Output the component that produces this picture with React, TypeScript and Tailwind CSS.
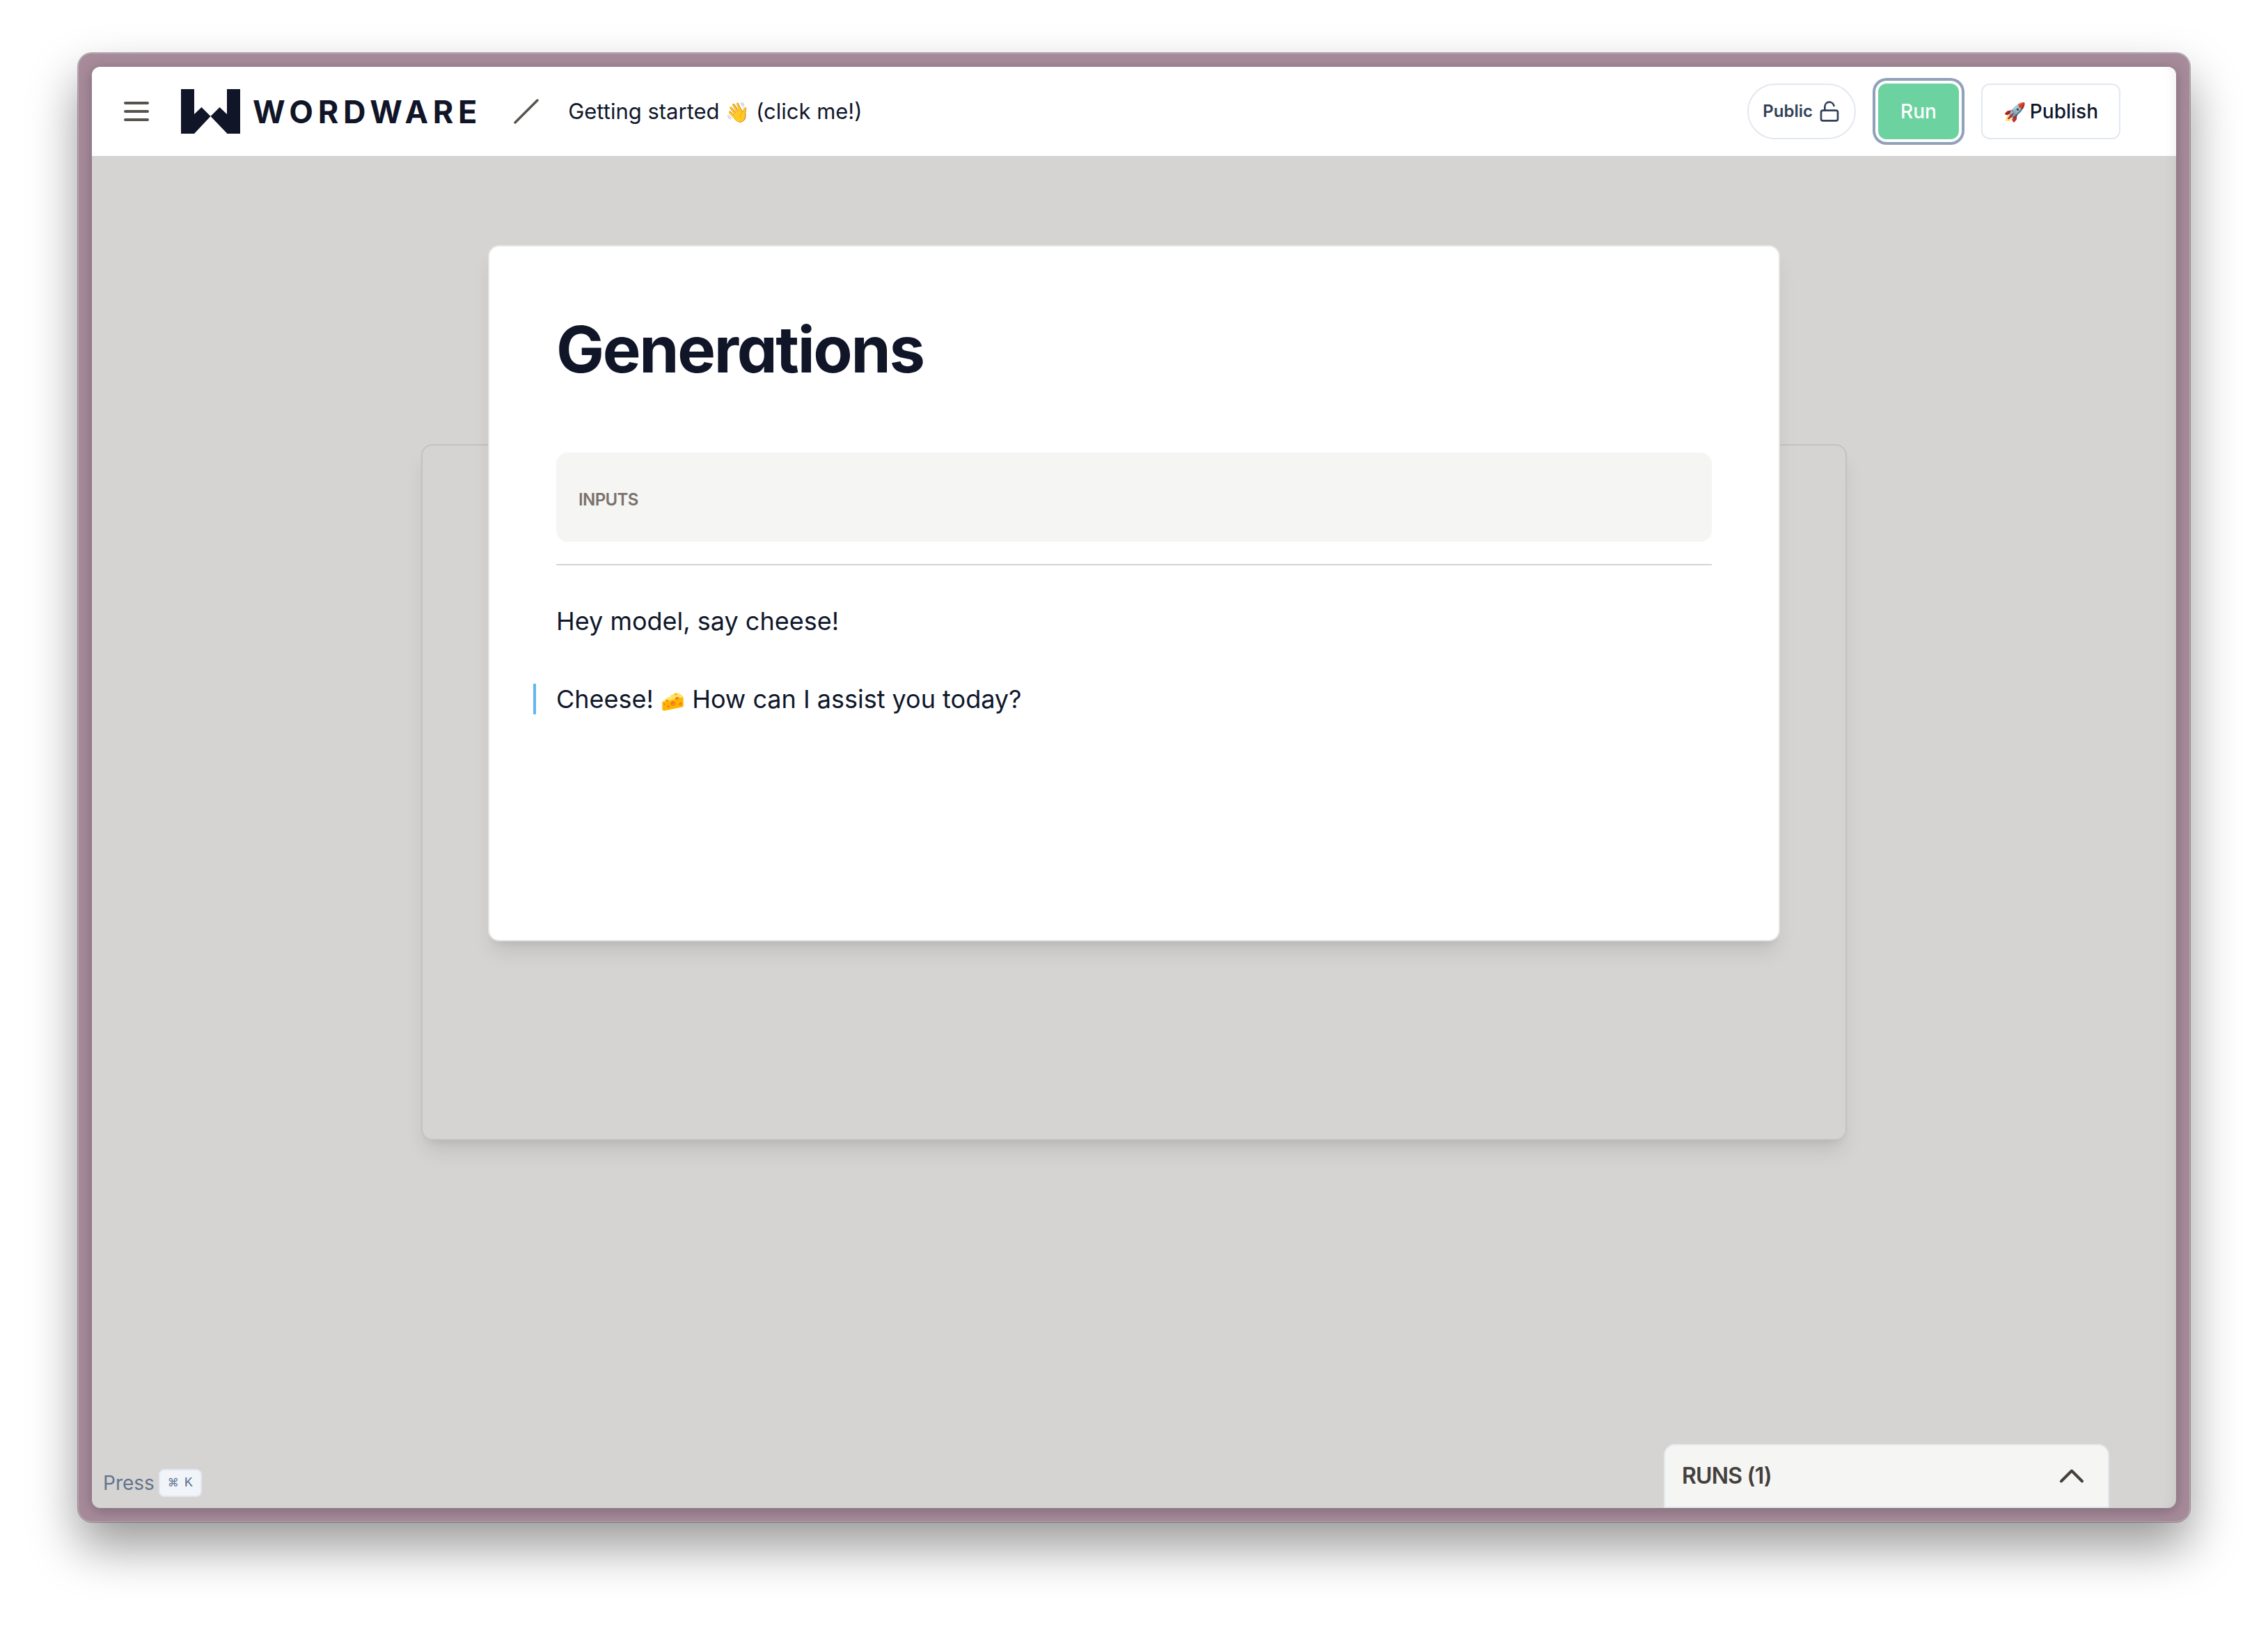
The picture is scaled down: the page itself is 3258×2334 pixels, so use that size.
import React from "react";
import { LockOpen } from "lucide-react";

function Logo() {
  return (
    <a href="#home" className="flex items-center gap-[18px] text-[#111528]" aria-label="Wordware">
      <svg width="85" height="64" viewBox="0 0 85 64" fill="currentColor" aria-hidden="true">
        <path d="M0 0H19V36L29.5 26L42.5 39L55.5 26L66 36V0H85V64H66.5L42.5 39L19 64H0Z" />
      </svg>
      <span className="text-[45px] leading-none font-bold tracking-[0.15em]">WORDWARE</span>
    </a>
  );
}

function Header() {
  return (
    <header className="flex h-32 items-center bg-white pr-20 pl-10">
      <button type="button" aria-label="Menu" className="text-stone-600">
        <svg width="48" height="48" viewBox="0 0 24 24" fill="none" stroke="currentColor" strokeWidth="2" strokeLinecap="round">
          <path d="M4 6H20M4 12H20M4 18H20" />
        </svg>
      </button>
      <div className="ml-10">
        <Logo />
      </div>
      <svg className="ml-10 text-stone-600" width="48" height="48" viewBox="0 0 48 48" fill="none" stroke="currentColor" strokeWidth="3.5" strokeLinecap="round" aria-hidden="true">
        <path d="M8 40L40 8" />
      </svg>
      <a href="#getting-started" className="ml-9 text-[31px] leading-10 text-slate-900">
        Getting started <span className="text-[28px]">👋</span> (click me!)
      </a>
      <div className="ml-auto flex items-center gap-8">
        <button type="button" className="flex h-20 items-center gap-2 rounded-full border-2 border-slate-200 px-5 text-2xl font-semibold text-slate-700">
          Public
          <LockOpen size={32} />
        </button>
        <button type="button" className="h-20 rounded-xl bg-[#6bd2a0] px-8 text-[28px] font-medium text-white ring-4 ring-slate-400 ring-offset-4">
          Run
        </button>
        <button type="button" className="flex h-20 items-center gap-1.5 rounded-xl border-2 border-slate-200 px-[30px] text-[28px] font-medium text-slate-900">
          <span className="text-[26px]">🚀</span>
          Publish
        </button>
      </div>
    </header>
  );
}

function GenerationsCard() {
  return (
    <section className="z-10 col-start-1 row-start-1 mt-32 min-h-[1000px] w-full max-w-[1856px] self-start justify-self-center rounded-2xl border-2 border-[#e5e5e4] bg-white p-24 shadow-[0_20px_30px_-6px_rgba(0,0,0,0.1),0_8px_12px_-8px_rgba(0,0,0,0.1)]">
      <h1 className="mb-24 text-[92px] leading-[104px] font-bold tracking-tight text-[#111528] [font-feature-settings:'cv11']">
        Generations
      </h1>
      <div className="flex h-32 items-center rounded-2xl bg-stone-100 px-8 pt-2 text-2xl font-semibold tracking-tight text-stone-500">INPUTS</div>
      <hr className="mt-8 border-t-2 border-stone-300" />
      <p className="mt-[58px] text-4xl leading-11 text-slate-900">Hey model, say cheese!</p>
      <p className="mt-[68px] -ml-[33px] border-l-4 border-[#60b8f2] pl-[29px] text-4xl leading-11 text-slate-900">
        Cheese! <span className="text-[28px] leading-none">🧀</span> How can I assist you today?
      </p>
    </section>
  );
}

export default function App() {
  return (
    <div className="flex min-h-screen flex-col bg-white px-28 pt-19 pb-37 font-['Inter',sans-serif]">
      <div className="flex flex-1 flex-col rounded-[20px] bg-[#a78b9b] p-5 shadow-[inset_0_0_0_1px_rgba(255,255,255,0.25),0_0_0_1px_rgba(0,0,0,0.3),0_36px_70px_rgba(0,0,0,0.4)]">
        <div className="relative flex flex-1 flex-col overflow-hidden rounded-xl bg-[#d5d4d2] shadow-[0_4px_20px_rgba(0,0,0,0.25)]">
          <Header />
          <main className="grid flex-1 grid-cols-1">
            <div className="col-start-1 row-start-1 mt-[414px] h-[1000px] w-full max-w-[2048px] self-start justify-self-center rounded-2xl border-2 border-[#c3c2c0] shadow-[0_20px_30px_-6px_rgba(0,0,0,0.1),0_8px_12px_-8px_rgba(0,0,0,0.1)]" />
            <GenerationsCard />
          </main>
          <footer className="flex items-end justify-between pr-24 pl-4">
            <p className="mb-4 flex items-center gap-1.5 text-[28px] leading-10 text-slate-500">
              Press
              <kbd className="flex h-10 items-center gap-2 rounded-lg border-2 border-slate-200 bg-slate-100 px-[11px] font-['Liberation_Mono',monospace] text-xl">
                <span className="font-['DejaVu_Sans',sans-serif] text-base font-medium">⌘</span>K
              </kbd>
            </p>
            <button type="button" className="flex h-[92px] w-[640px] items-center justify-between rounded-t-2xl border-2 border-slate-200 bg-stone-100 pr-7 pl-6 text-[32px] font-semibold tracking-tight text-stone-700">
              RUNS (1)
              <svg width="48" height="48" viewBox="0 0 24 24" fill="none" stroke="currentColor" strokeWidth="2" strokeLinecap="round" strokeLinejoin="round" aria-hidden="true">
                <path d="m4.5 15.75 7.5-7.5 7.5 7.5" />
              </svg>
            </button>
          </footer>
          <div className="pointer-events-none absolute inset-0 rounded-xl shadow-[inset_-16px_0_20px_-16px_rgba(0,0,0,0.08)]" />
        </div>
      </div>
    </div>
  );
}
